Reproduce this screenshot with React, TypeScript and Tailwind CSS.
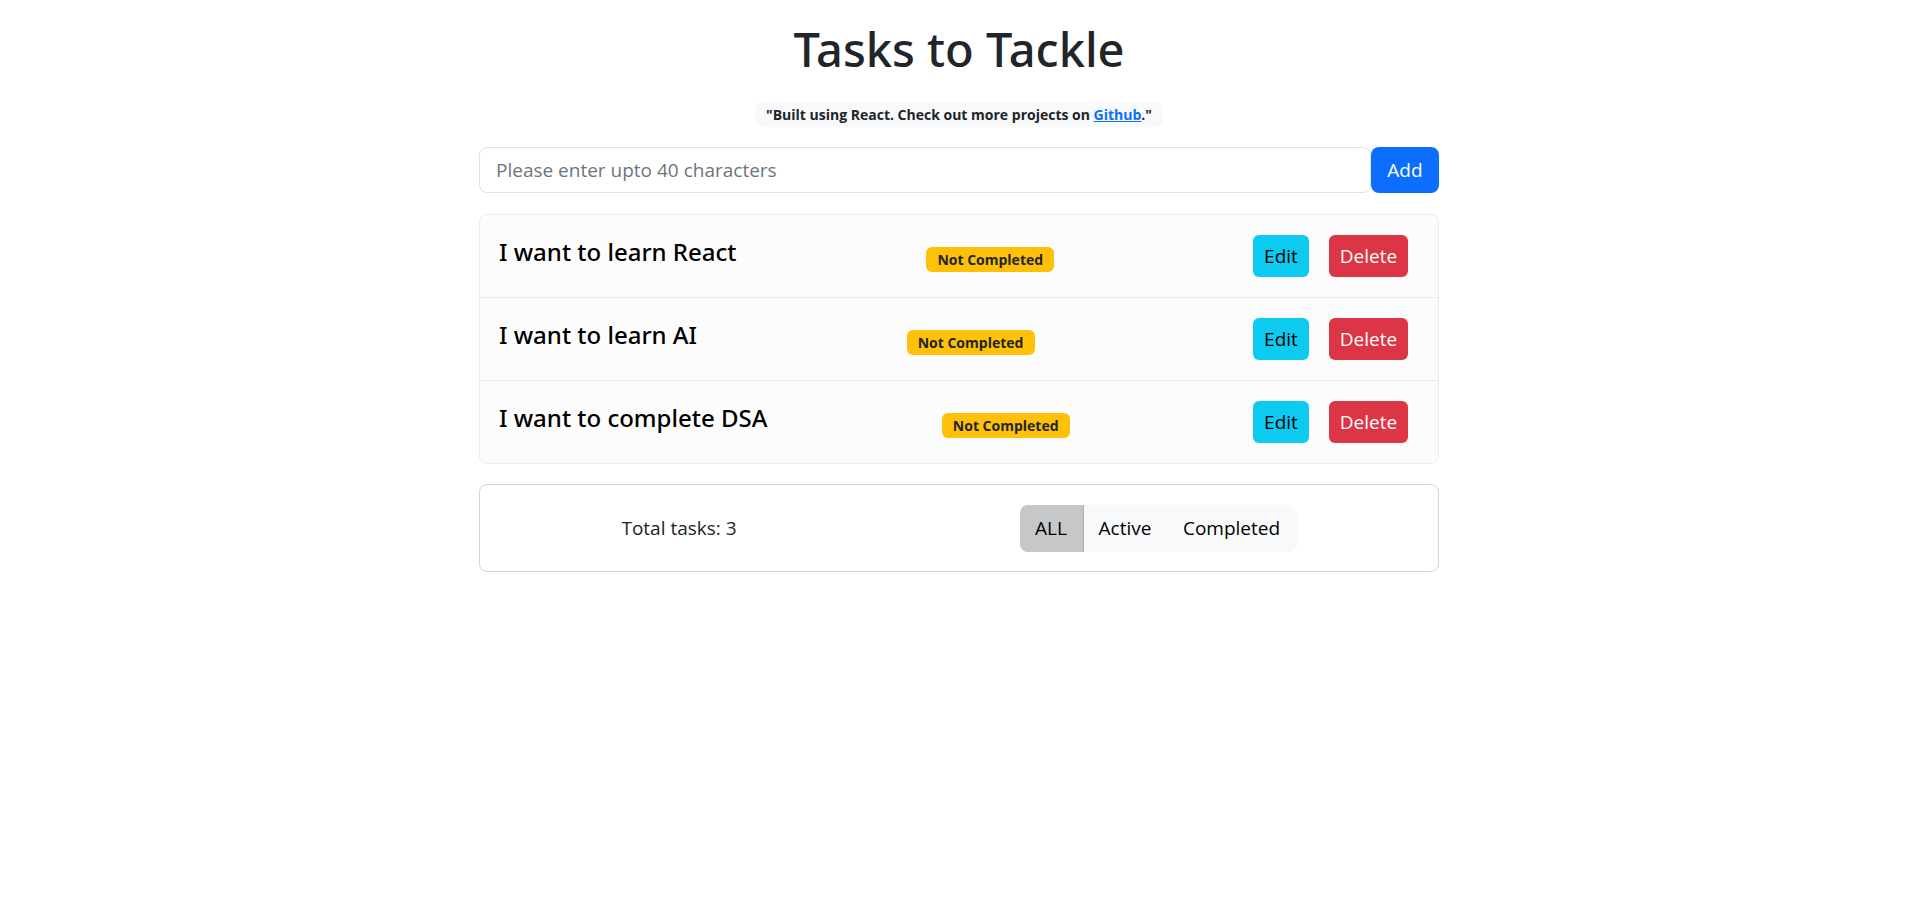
import React from "react";

const tasks = [
  "I want to learn React",
  "I want to learn AI",
  "I want to complete DSA",
];

export default function App() {
  return (
    <div className="min-h-screen bg-white font-['Open_Sans',sans-serif] text-[#212529]">
      <div className="mx-auto w-[960px] flex flex-col">
        <h1 className="mt-[20px] text-center text-[47px] leading-[58px] font-medium font-['Noto_Sans',sans-serif] text-[#212529]">
          Tasks to Tackle
        </h1>
        <div className="mt-[24px] flex justify-center">
          <p className="h-[25px] px-[11px] rounded-lg bg-[#f8f9fa] flex items-center text-[14px] font-bold text-[#212529]">
            {'"Built using React. Check out more projects on\u00a0'}
            <a href="#" className="text-[#0d6efd] underline">
              Github
            </a>
            {'."'}
          </p>
        </div>

        <div className="mt-[20px] flex h-[46px]">
          <input
            type="text"
            placeholder="Please enter upto 40 characters"
            className="flex-1 h-[46px] border border-[#dee2e6] rounded-lg px-4 text-[19px] text-[#212529] placeholder:text-[#6c757d] outline-none bg-white"
          />
          <button className="w-[68px] h-[46px] rounded-lg bg-[#0d6efd] text-white text-[19px] flex items-center justify-center">
            Add
          </button>
        </div>

        <div className="mt-[21px] border border-[#e9ecef] rounded-lg bg-[#fcfcfc] overflow-hidden">
          {tasks.map((t, i) => (
            <div
              key={t}
              className={
                i < tasks.length - 1
                  ? "h-[83px] flex items-center justify-between pl-[19px] pr-[16px] border-b border-[#e9ecef]"
                  : "h-[82px] flex items-center justify-between pl-[19px] pr-[16px]"
              }
            >
              <span className="mb-[9px] text-[24px] leading-[25px] font-medium font-['Noto_Sans',sans-serif] text-black whitespace-nowrap">
                {t}
              </span>
              <span className="mt-[6px] w-[128px] h-[25px] rounded-md bg-[#ffc107] text-[#212529] text-[14px] font-bold flex items-center justify-center whitespace-nowrap">
                Not Completed
              </span>
              <div className="flex items-center gap-[20px] pl-[9px] pr-[14px]">
                <button className="w-[56px] h-[42px] rounded-md bg-[#0dcaf0] text-black text-[19px] flex items-center justify-center">
                  Edit
                </button>
                <button className="w-[79px] h-[42px] rounded-md bg-[#dc3545] text-white text-[19px] flex items-center justify-center">
                  Delete
                </button>
              </div>
            </div>
          ))}
        </div>

        <div className="mt-[20px] h-[88px] border border-[#d4d4d4] rounded-lg flex items-center justify-around">
          <span className="text-[19px] text-[#212529]">Total tasks: 3</span>
          <div className="flex h-[47px] rounded-lg overflow-hidden bg-[#f8f9fa] text-[19px]">
            <button className="w-[64px] h-[47px] bg-[#c6c7c8] border-r border-[#adb0b3] flex items-center justify-center text-black">
              ALL
            </button>
            <button className="w-[83px] h-[47px] flex items-center justify-center text-black">
              Active
            </button>
            <button className="w-[130px] h-[47px] flex items-center justify-center text-black">
              Completed
            </button>
          </div>
        </div>
      </div>
    </div>
  );
}
